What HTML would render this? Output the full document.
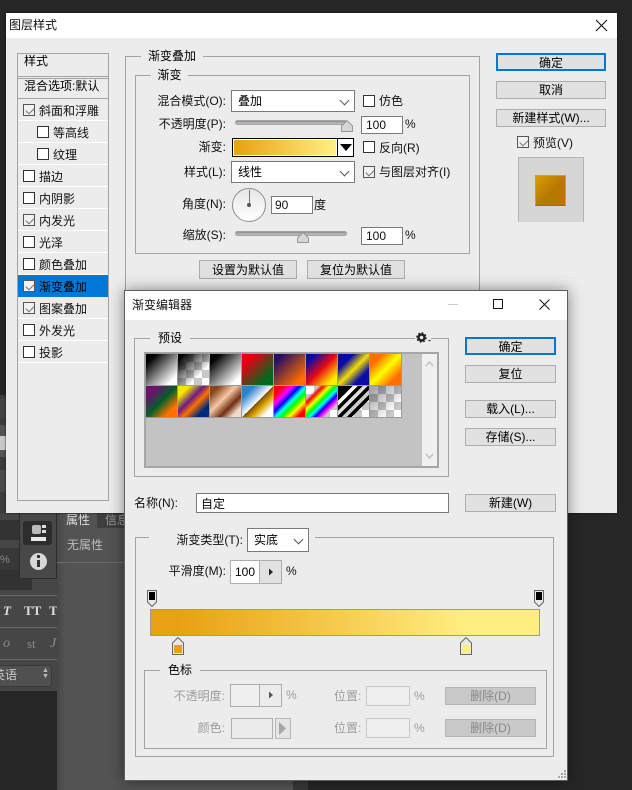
<!DOCTYPE html>
<html lang="zh"><head><meta charset="utf-8"><style>
html,body{margin:0;padding:0;width:632px;height:790px;overflow:hidden;background:#262626}
body{position:relative;font:12px/16px "Liberation Sans","WenQuanYi Zen Hei","Noto Sans CJK SC",sans-serif;color:#111}
div,span{position:absolute;box-sizing:border-box}
.t{white-space:nowrap;height:16px}
.r{text-align:right}
.c{text-align:center}
.fs{border:1px solid #a3a3a3}
.lg{background:#ececec;text-align:center;height:16px;white-space:nowrap;color:#000}
.sel{background:#fff;border:1px solid #7a7a7a}
.sel:after{content:"";position:absolute;right:6px;top:50%;margin-top:-4px;width:6px;height:6px;border-right:1px solid #555;border-bottom:1px solid #555;transform:rotate(45deg)}
.in{background:#fff;border:1px solid #7a7a7a;padding-left:4px;line-height:16px;color:#111}
.btn{background:#e1e1e1;border:1px solid #adadad;text-align:center;line-height:18px;color:#000;white-space:nowrap}
.def{border:2px solid #0078d7;line-height:16px}
.cb{width:11px;height:11px;border:1px solid #333;background:#fff;width:12px;height:12px}
.ck{background:#f2f2f2;border-color:#555}
.ck:after{content:"";position:absolute;left:2px;top:1px;width:7px;height:4px;border-left:1px solid #777;border-bottom:1px solid #777;transform:rotate(-45deg) translate(-1px,1px)}
.row{left:1px;width:90px;height:22px;border-bottom:1px solid #fff}
.sl{height:5px;border-radius:3px;background:linear-gradient(#8f8f8f,#c4c4c4);border:1px solid #a3a3a3}
.gr{color:#9d9d9d}
.sw{width:31px;height:31px}
.ckr{background-color:#fff;background-image:conic-gradient(#c8c8c8 25%,#fff 0 50%,#c8c8c8 0 75%,#fff 0);background-size:16px 16px}
</style></head><body>

<!-- background panels -->
<div style="left:0;top:395px;width:57px;height:296px;background:#3d3d3d"></div>
<div style="left:0;top:398px;width:6px;height:20px;background:#424242"></div>
<div style="left:0;top:425px;width:6px;height:32px;background:#555"></div>
<div style="left:0;top:436px;width:6px;height:14px;background:#c9c9c9"></div>
<div style="left:0;top:470px;width:6px;height:22px;background:#4a4a4a"></div>
<div style="left:0;top:513px;width:57px;height:178px;background:#464646"></div>
<div style="left:0;top:520px;width:19px;height:20px;background:#333"></div>
<div style="left:0;top:548px;width:19px;height:22px;background:#383838"></div>
<div class="t" style="left:0;top:552px;color:#888;font-size:11px">%</div>
<div style="left:0;top:570px;width:32px;height:20px;background:#323232"></div>
<div style="left:0;top:595px;width:57px;height:1px;background:#666"></div>
<div style="left:0;top:627px;width:57px;height:1px;background:#666"></div>
<div style="left:0;top:659px;width:57px;height:1px;background:#666"></div>
<div class="t" style="left:3px;top:603px;color:#ddd;font:italic bold 13px 'Liberation Serif',serif">T</div>
<div class="t" style="left:24px;top:603px;color:#ddd;font:bold 13px 'Liberation Serif',serif">TT</div>
<div class="t" style="left:49px;top:603px;color:#ddd;font:bold 13px 'Liberation Serif',serif">T</div>
<div class="t" style="left:3px;top:636px;color:#8a8a8a;font:italic 14px 'Liberation Serif',serif">o</div>
<div class="t" style="left:27px;top:636px;color:#8a8a8a;font:13px 'Liberation Serif',serif">st</div>
<div class="t" style="left:50px;top:636px;color:#8a8a8a;font:italic 14px 'Liberation Serif',serif">J</div>
<div style="left:-6px;top:665px;width:58px;height:22px;background:#505050;border:1px solid #393939;border-radius:3px"></div>
<div class="t" style="left:0;top:667px;color:#ccc;width:17px;overflow:hidden;direction:rtl">英语</div>
<div class="t" style="left:42px;top:668px;color:#bbb;font-size:7px;line-height:6px;height:14px">▲<br>▼</div>
<div style="left:57px;top:513px;width:236px;height:277px;background:linear-gradient(90deg,#464646,#535353 8px)"></div>
<div style="left:293px;top:780px;width:15px;height:10px;background:#383838"></div>
<div style="left:97px;top:513px;width:30px;height:15px;background:#3f3f3f"></div>
<div style="left:57px;top:562px;width:70px;height:1px;background:#6c6c6c"></div>
<div class="t" style="left:66px;top:512px;color:#ddd">属性</div>
<div class="t" style="left:105px;top:512px;color:#999">信息</div>
<div class="t" style="left:67px;top:537px;color:#bcbcbc">无属性</div>
<div style="left:19px;top:500px;width:38px;height:79px;background:#484848;border:1px solid #2c2c2c"></div>
<div style="left:23px;top:521px;width:29px;height:24px;background:#2d2d2d;border-radius:3px"></div>
<div style="left:32px;top:525px;width:9px;height:9px;background:#bbb;border-radius:2px"></div>
<div style="left:42px;top:525px;width:4px;height:3px;background:#ddd"></div>
<div style="left:42px;top:530px;width:4px;height:3px;background:#ddd"></div>
<div style="left:31px;top:537px;width:15px;height:4px;background:#e8e8e8"></div>
<div style="left:30px;top:553px;width:17px;height:17px;border-radius:50%;background:#d8d8d8"></div>
<div style="left:37px;top:555px;width:3px;height:3px;background:#333"></div>
<div style="left:37px;top:560px;width:3px;height:7px;background:#333"></div>

<!-- layer style dialog -->
<div id="d1" style="left:6px;top:13px;width:611px;height:500px;background:#ececec;box-shadow:0 0 2px #111">
  <div style="left:0;top:0;width:611px;height:25px;background:#fff"></div>
</div>
<div class="t" style="left:9px;top:17px;color:#111">图层样式</div>
<svg style="position:absolute;left:595px;top:19px" width="13" height="13" viewBox="0 0 13 13"><path d="M1 1L12 12M12 1L1 12" stroke="#111" stroke-width="1.1" fill="none"/></svg>

<!-- style list -->
<div class="fs" style="left:17px;top:53px;width:92px;height:448px">
  <div style="left:0;top:22px;width:90px;height:1px;background:#a3a3a3"></div>
  <div style="left:0;top:24px;width:90px;height:1px;background:#a3a3a3"></div>
  <div style="left:0;top:44px;width:90px;height:1px;background:#a3a3a3"></div>
  <div class="row" style="left:0;top:45px"></div>
  <div class="row" style="left:0;top:67px"></div>
  <div class="row" style="left:0;top:89px"></div>
  <div class="row" style="left:0;top:111px"></div>
  <div class="row" style="left:0;top:133px"></div>
  <div class="row" style="left:0;top:155px"></div>
  <div class="row" style="left:0;top:177px"></div>
  <div class="row" style="left:0;top:199px"></div>
  <div class="row" style="left:0;top:221px;background:#0078d7;border-bottom:0"></div>
  <div class="row" style="left:0;top:243px"></div>
  <div class="row" style="left:0;top:265px"></div>
  <div class="row" style="left:0;top:287px"></div>
</div>
<div class="t" style="left:24px;top:53px;color:#000">样式</div>
<div class="t" style="left:24px;top:78px;color:#000">混合选项:默认</div>
<div class="cb ck" style="left:23px;top:104px"></div><div class="t" style="left:39px;top:103px">斜面和浮雕</div>
<div class="cb" style="left:37px;top:126px"></div><div class="t" style="left:53px;top:125px">等高线</div>
<div class="cb" style="left:37px;top:148px"></div><div class="t" style="left:53px;top:147px">纹理</div>
<div class="cb" style="left:23px;top:170px"></div><div class="t" style="left:39px;top:169px">描边</div>
<div class="cb" style="left:23px;top:192px"></div><div class="t" style="left:39px;top:191px">内阴影</div>
<div class="cb ck" style="left:23px;top:214px"></div><div class="t" style="left:39px;top:213px">内发光</div>
<div class="cb" style="left:23px;top:236px"></div><div class="t" style="left:39px;top:235px">光泽</div>
<div class="cb" style="left:23px;top:258px"></div><div class="t" style="left:39px;top:257px">颜色叠加</div>
<div class="cb ck" style="left:23px;top:280px"></div><div class="t" style="left:39px;top:279px;color:#000">渐变叠加</div>
<div class="cb ck" style="left:23px;top:302px"></div><div class="t" style="left:39px;top:301px">图案叠加</div>
<div class="cb" style="left:23px;top:324px"></div><div class="t" style="left:39px;top:323px">外发光</div>
<div class="cb" style="left:23px;top:346px"></div><div class="t" style="left:39px;top:345px">投影</div>

<!-- gradient overlay group -->
<div class="fs" style="left:125px;top:56px;width:355px;height:240px"></div>
<div class="lg" style="left:141px;top:48px;width:62px">渐变叠加</div>
<div class="fs" style="left:135px;top:75px;width:335px;height:179px"></div>
<div class="lg" style="left:151px;top:67px;width:37px">渐变</div>

<div class="t r" style="left:130px;width:96px;top:93px">混合模式(O):</div>
<div class="sel t" style="left:231px;top:90px;width:124px;height:22px;padding:2px 0 0 6px;line-height:16px;color:#000">叠加</div>
<div class="cb" style="left:363px;top:95px"></div><div class="t" style="left:379px;top:93px">仿色</div>

<div class="t r" style="left:130px;width:96px;top:116px">不透明度(P):</div>
<div class="sl" style="left:235px;top:120px;width:112px"></div>
<svg style="position:absolute;left:341px;top:120px" width="12" height="12" viewBox="0 0 12 12"><path d="M6 .5L11.5 6V11.5H.5V6Z" fill="#d6d6d6" stroke="#999"/></svg>
<div class="in t" style="left:361px;top:116px;width:42px;height:18px">100</div>
<div class="t" style="left:405px;top:116px">%</div>

<div class="t r" style="left:130px;width:96px;top:139px">渐变:</div>
<div style="left:232px;top:138px;width:122px;height:19px;background:#fff;border:1px solid #000"></div>
<div style="left:234px;top:140px;width:102px;height:15px;background:linear-gradient(90deg,#eaa013,#fff084)"></div>
<div style="left:337px;top:139px;width:1px;height:17px;background:#000"></div>
<svg style="position:absolute;left:339px;top:143px" width="14" height="9" viewBox="0 0 14 9"><path d="M1 1H13L7 8Z" fill="#000"/></svg>
<div class="cb" style="left:363px;top:141px"></div><div class="t" style="left:379px;top:140px">反向(R)</div>

<div class="t r" style="left:130px;width:96px;top:164px">样式(L):</div>
<div class="sel t" style="left:231px;top:161px;width:124px;height:22px;padding:2px 0 0 6px;line-height:16px;color:#000">线性</div>
<div class="cb ck" style="left:363px;top:166px"></div><div class="t" style="left:379px;top:164px">与图层对齐(I)</div>

<div class="t r" style="left:130px;width:96px;top:196px">角度(N):</div>
<div style="left:232px;top:188px;width:34px;height:34px;border-radius:50%;border:1px solid #8e8e8e;background:linear-gradient(#e6e6e6,#fff)"></div>
<div style="left:249px;top:190px;width:1px;height:14px;background:#777"></div>
<div style="left:247px;top:203px;width:4px;height:4px;border-radius:50%;background:#555"></div>
<div class="in t" style="left:271px;top:196px;width:42px;height:18px;padding-left:3px">90</div>
<div class="t" style="left:314px;top:197px">度</div>

<div class="t r" style="left:130px;width:96px;top:227px">缩放(S):</div>
<div class="sl" style="left:235px;top:231px;width:112px"></div>
<svg style="position:absolute;left:297px;top:232px" width="12" height="11" viewBox="0 0 12 11"><path d="M6 .5L11.5 6V10.5H.5V6Z" fill="#d6d6d6" stroke="#999"/></svg>
<div class="in t" style="left:361px;top:227px;width:42px;height:18px">100</div>
<div class="t" style="left:405px;top:227px">%</div>

<div class="btn" style="left:199px;top:260px;width:98px;height:19px">设置为默认值</div>
<div class="btn" style="left:307px;top:260px;width:98px;height:19px">复位为默认值</div>

<div class="btn def" style="left:496px;top:53px;width:110px;height:18px">确定</div>
<div class="btn" style="left:496px;top:81px;width:110px;height:18px;line-height:17px">取消</div>
<div class="btn" style="left:496px;top:109px;width:110px;height:18px;line-height:17px">新建样式(W)...</div>
<div class="cb ck" style="left:517px;top:136px"></div><div class="t" style="left:533px;top:135px">预览(V)</div>
<div style="left:518px;top:157px;width:66px;height:65px;background:#d6d6d6;border:1px solid #b5b5b5;border-bottom:0"></div>
<div style="left:535px;top:175px;width:31px;height:31px;background:linear-gradient(135deg,#dc9c05,#b57800 55%,#b57800 80%,#c66f00);border:1px solid #e0a000;border-bottom:1px solid #e0500a"></div>

<!-- gradient editor -->
<div style="left:124px;top:290px;width:444px;height:491px;background:#ececec;border:1px solid #5f5f5f;box-shadow:0 0 14px rgba(0,0,0,.45)"></div>
<div style="left:125px;top:291px;width:442px;height:29px;background:#fff"></div>
<div class="t" style="left:132px;top:297px;color:#111">渐变编辑器</div>
<div style="left:448px;top:304px;width:10px;height:1px;background:#ccc"></div>
<div style="left:493px;top:299px;width:10px;height:10px;border:1px solid #111"></div>
<svg style="position:absolute;left:539px;top:299px" width="11" height="11" viewBox="0 0 11 11"><path d="M.5 .5L10.5 10.5M10.5 .5L.5 10.5" stroke="#111" stroke-width="1" fill="none"/></svg>

<!-- presets -->
<div class="fs" style="left:134px;top:338px;width:315px;height:139px"></div>
<div class="lg" style="left:150px;top:330px;width:40px">预设</div>
<div style="left:415px;top:332px;width:16px;height:12px;background:#ececec"></div>
<svg style="position:absolute;left:416px;top:332px" width="16" height="12" viewBox="0 0 16 12"><circle cx="5.5" cy="5.5" r="3" fill="none" stroke="#222" stroke-width="2.4"/><circle cx="5.5" cy="5.5" r="4.6" fill="none" stroke="#222" stroke-width="1.4" stroke-dasharray="1.8 1.8"/><path d="M12 8H15L13.5 9.5Z" fill="#222"/></svg>
<div style="left:144px;top:352px;width:295px;height:116px;background:#c3c3c3;border:2px solid #a6a6a6"></div>
<div style="left:422px;top:354px;width:15px;height:112px;background:#f0f0f0"></div>
<svg style="position:absolute;left:425px;top:360px" width="9" height="100" viewBox="0 0 9 100"><path d="M1 6L4.5 2L8 6M1 94L4.5 98L8 94" stroke="#c4c4c4" stroke-width="1.6" fill="none"/></svg>
<div style="left:145px;top:353px;width:257px;height:65px;background:#9a9a9a"></div>
<div class="sw" style="left:146px;top:354px;background:linear-gradient(135deg,#000 15%,#fff 85%)"></div>
<div class="sw ckr" style="left:178px;top:354px"></div>
<div class="sw" style="left:178px;top:354px;background:linear-gradient(135deg,#000 10%,rgba(0,0,0,0) 70%)"></div>
<div class="sw" style="left:210px;top:354px;background:linear-gradient(135deg,#000 15%,#fff 85%)"></div>
<div class="sw" style="left:242px;top:354px;background:linear-gradient(135deg,#e60012 20%,#006a1c 80%)"></div>
<div class="sw" style="left:274px;top:354px;background:linear-gradient(135deg,#2a0e63 15%,#ff6e00 85%)"></div>
<div class="sw" style="left:306px;top:354px;background:linear-gradient(135deg,#0a0aa5 15%,#e80a14 50%,#ffee00 85%)"></div>
<div class="sw" style="left:338px;top:354px;background:linear-gradient(135deg,#0a0aa5 25%,#f2e000 50%,#0a0aa5 75%)"></div>
<div class="sw" style="left:370px;top:354px;background:linear-gradient(135deg,#ff6e00 20%,#ffff00 50%,#ff6e00 80%)"></div>
<div class="sw" style="left:146px;top:386px;background:linear-gradient(135deg,#6c116e 20%,#005f2a 50%,#ff7200 80%)"></div>
<div class="sw" style="left:178px;top:386px;background:linear-gradient(135deg,#f7e600 18%,#6b1c82 42%,#ff7000 58%,#00297a 80%)"></div>
<div class="sw" style="left:210px;top:386px;background:linear-gradient(135deg,#8c4516 15%,#f6c8a6 42%,#6f2e10 66%,#efdccc 85%)"></div>
<div class="sw" style="left:242px;top:386px;background:linear-gradient(135deg,#2a85cf 20%,#fff 50%,#7a4c00 50%,#e0a800 66%,#fff 84%)"></div>
<div class="sw" style="left:274px;top:386px;background:linear-gradient(135deg,#f00 14%,#f0f 30%,#00f 42%,#0ff 52%,#0f0 62%,#ff0 74%,#f00 88%)"></div>
<div class="sw ckr" style="left:306px;top:386px"></div>
<div class="sw" style="left:306px;top:386px;background:linear-gradient(135deg,rgba(255,0,0,0) 20%,#f00 28%,#ff0 38%,#0f0 48%,#0ff 56%,#00f 64%,#f0f 72%,rgba(255,0,255,0) 80%)"></div>
<div class="sw ckr" style="left:338px;top:386px"></div>
<div class="sw" style="left:338px;top:386px;background:linear-gradient(135deg,#000 24%,#fff 24% 32%,#000 32% 40%,#ddd 40% 48%,#000 48% 56%,#ccc 56% 64%,#000 64% 72%,rgba(0,0,0,0) 72%)"></div>
<div class="sw ckr" style="left:370px;top:386px"></div>
<div class="sw" style="left:370px;top:386px;background:linear-gradient(135deg,rgba(0,0,0,.35) 10%,rgba(0,0,0,0) 80%)"></div>

<!-- name row -->
<div class="t" style="left:134px;top:495px;color:#111">名称(N):</div>
<div class="in t" style="left:196px;top:493px;width:253px;height:20px;line-height:20px;color:#000">自定</div>

<!-- right buttons -->
<div class="btn def" style="left:465px;top:337px;width:91px;height:18px">确定</div>
<div class="btn" style="left:465px;top:365px;width:91px;height:18px;line-height:17px">复位</div>
<div class="btn" style="left:465px;top:400px;width:91px;height:18px;line-height:17px">载入(L)...</div>
<div class="btn" style="left:465px;top:428px;width:91px;height:18px;line-height:17px">存储(S)...</div>
<div class="btn" style="left:465px;top:494px;width:91px;height:18px;line-height:17px">新建(W)</div>

<!-- gradient type group -->
<div class="fs" style="left:135px;top:537px;width:419px;height:220px"></div>
<div class="lg" style="left:149px;top:530px;width:166px;height:16px"></div>
<div class="t r" style="left:150px;width:93px;top:532px">渐变类型(T):</div>
<div class="sel t" style="left:247px;top:528px;width:62px;height:24px;padding:3px 0 0 6px;color:#000">实底</div>
<div class="t r" style="left:140px;width:86px;top:563px">平滑度(M):</div>
<div class="in t" style="left:230px;top:560px;width:30px;height:24px;border-color:#adadad;line-height:22px;padding-left:4px;color:#000">100</div>
<div style="left:259px;top:560px;width:23px;height:24px;background:#e1e1e1;border:1px solid #adadad"></div>
<svg style="position:absolute;left:268px;top:568px" width="6" height="8" viewBox="0 0 6 8"><path d="M1 0.5L5 4L1 7.5Z" fill="#222"/></svg>
<div class="t" style="left:286px;top:563px">%</div>

<svg style="position:absolute;left:146px;top:590px" width="12" height="18" viewBox="0 0 12 18"><path d="M1.500 .5H10.500V12L6 16.500L1.500 12Z" fill="#e8e8e8" stroke="#666"/><rect x="3" y="2" width="6" height="8" fill="#000"/></svg>
<svg style="position:absolute;left:533px;top:590px" width="12" height="18" viewBox="0 0 12 18"><path d="M1.500 .5H10.500V12L6 16.500L1.500 12Z" fill="#e8e8e8" stroke="#666"/><rect x="3" y="2" width="6" height="8" fill="#000"/></svg>
<div style="left:150px;top:609px;width:390px;height:27px;border:1px solid #9a9a9a;background:linear-gradient(90deg,#eaa013 0,#eaa013 7%,#ffee80 81%,#ffee80 100%)"></div>
<svg style="position:absolute;left:172px;top:637px" width="12" height="18" viewBox="0 0 12 18"><path d="M.5 17.500V6L6 .5L11.500 6V17.500Z" fill="#e8e8e8" stroke="#666"/><rect x="2" y="8" width="8" height="8" fill="#eaa013"/></svg>
<svg style="position:absolute;left:460px;top:637px" width="12" height="18" viewBox="0 0 12 18"><path d="M.5 17.500V6L6 .5L11.500 6V17.500Z" fill="#e8e8e8" stroke="#666"/><rect x="2" y="8" width="8" height="8" fill="#ffee80"/></svg>

<!-- color stops -->
<div class="fs" style="left:144px;top:670px;width:403px;height:79px"></div>
<div class="lg" style="left:160px;top:662px;width:40px">色标</div>
<div class="t r gr" style="left:150px;width:75px;top:688px">不透明度:</div>
<div style="left:230px;top:684px;width:30px;height:23px;background:#efefef;border:1px solid #adadad"></div>
<div style="left:259px;top:684px;width:23px;height:23px;background:#ececec;border:1px solid #adadad"></div>
<svg style="position:absolute;left:268px;top:691px" width="6" height="8" viewBox="0 0 6 8"><path d="M1 0.5L5 4L1 7.5Z" fill="#555"/></svg>
<div class="t gr" style="left:286px;top:687px">%</div>
<div class="t gr" style="left:334px;top:688px">位置:</div>
<div style="left:366px;top:686px;width:44px;height:20px;background:#efefef;border:1px solid #c8c8c8"></div>
<div class="t gr" style="left:414px;top:688px">%</div>
<div class="btn" style="left:445px;top:687px;width:91px;height:18px;line-height:17px;background:#c9c9c9;border-color:#b5b5b5;color:#8a8a8a">删除(D)</div>

<div class="t r gr" style="left:150px;width:75px;top:720px">颜色:</div>
<div style="left:231px;top:718px;width:42px;height:21px;background:#ececec;border:1px solid #b0b0b0"></div>
<div style="left:275px;top:718px;width:16px;height:21px;background:#e4e4e4;border:1px solid #b8b8b8"></div>
<svg style="position:absolute;left:278px;top:721px" width="10" height="15" viewBox="0 0 10 15"><path d="M1 1L8 7.500L1 14Z" fill="#a5a5a5"/></svg>
<div class="t gr" style="left:334px;top:720px">位置:</div>
<div style="left:366px;top:718px;width:44px;height:20px;background:#efefef;border:1px solid #c8c8c8"></div>
<div class="t gr" style="left:414px;top:720px">%</div>
<div class="btn" style="left:445px;top:719px;width:91px;height:18px;line-height:17px;background:#c9c9c9;border-color:#b5b5b5;color:#8a8a8a">删除(D)</div>

<svg style="position:absolute;left:557px;top:769px" width="10" height="10" viewBox="0 0 10 10"><path d="M7 1h2v2H7zM4 4h2v2H4zM7 4h2v2H7zM1 7h2v2H1zM4 7h2v2H4zM7 7h2v2H7z" fill="#a8a8a8"/></svg>
</body></html>
